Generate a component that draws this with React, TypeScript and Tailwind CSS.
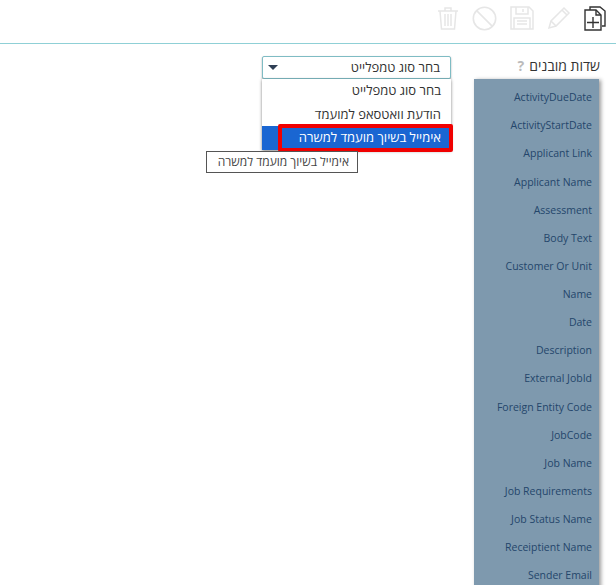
import React from "react";

const fields = [
  "ActivityDueDate",
  "ActivityStartDate",
  "Applicant Link",
  "Applicant Name",
  "Assessment",
  "Body Text",
  "Customer Or Unit",
  "Name",
  "Date",
  "Description",
  "External JobId",
  "Foreign Entity Code",
  "JobCode",
  "Job Name",
  "Job Requirements",
  "Job Status Name",
  "Receiptient Name",
  "Sender Email",
];

function TrashIcon() {
  return (
    <svg width="22" height="24" viewBox="0 0 22 24" fill="none" stroke="#e6e6e6" strokeWidth="1.5">
      <path d="M1 5h20M8 5V2h6v3" />
      <path d="M3 5l1.5 18h13L19 5" />
      <path d="M8 8v12M11 8v12M14 8v12" />
    </svg>
  );
}

function BanIcon() {
  return (
    <svg width="25" height="25" viewBox="0 0 25 25" fill="none" stroke="#e6e6e6" strokeWidth="1.6">
      <circle cx="12.5" cy="12.5" r="11.2" />
      <path d="M4.6 4.6l15.8 15.8" />
    </svg>
  );
}

function SaveIcon() {
  return (
    <svg width="24" height="24" viewBox="0 0 24 24" fill="none" stroke="#e6e6e6" strokeWidth="1.5">
      <path d="M1 1h18l4 4v18H1z" />
      <path d="M6 1v7h12V1M13 3v3" />
      <path d="M4 23V12h16v11M7 15h10M7 18h10" />
    </svg>
  );
}

function PencilIcon() {
  return (
    <svg width="24" height="24" viewBox="0 0 24 24" fill="none" stroke="#e6e6e6" strokeWidth="1.5">
      <path d="M2 22l2-7L17 2l5 5L9 20z" />
      <path d="M4 15l5 5M15 4l5 5" />
    </svg>
  );
}

function NewIcon() {
  return (
    <svg width="22" height="25" viewBox="0 0 22 25" fill="none" stroke="#333333" strokeWidth="1.4">
      <path d="M6 4V1h10l5 4v15h-3" />
      <path d="M1 4h11l5 5v15H1z" fill="#ffffff" />
      <path d="M12 4v5h5" />
      <path d="M9 11v11M3 16.5h12" />
    </svg>
  );
}

export default function App(): JSX.Element {
  return (
    <div className="w-[616px] h-[585px] overflow-hidden bg-white font-['Open_Sans','Liberation_Sans',sans-serif]">
      <div className="h-[44px] border-b border-[#8fd0d6] flex justify-end items-start pt-[6px] pr-[10px] gap-[13px]">
        <TrashIcon />
        <BanIcon />
        <SaveIcon />
        <PencilIcon />
        <NewIcon />
      </div>
      <div className="flex justify-end items-start pr-[17px] gap-[23px] pt-[12px]">
        <div className="relative w-[189px] mt-0">
          <div className="h-[23px] rounded-[2px] border border-[#7fbcc4] shadow-[0_1px_2px_rgba(0,0,0,0.35)] flex items-center justify-between pl-[5px] pr-[10px] text-[13px] text-[#333333] bg-white">
            <span className="w-0 h-0 border-x-[5px] border-x-transparent border-t-[5px] border-t-[#2f3f55]" />
            <span dir="rtl">בחר סוג טמפלייט</span>
          </div>
          <div dir="rtl" className="absolute top-[23px] left-0 w-[189px] h-[71px] bg-white shadow-[0_1px_3px_rgba(0,0,0,0.5)] text-[13px] text-[#333333]">
            <div className="h-[24px] flex items-center pr-[10px]">בחר סוג טמפלייט</div>
            <div className="h-[23px] flex items-center pr-[10px]">הודעת וואטסאפ למועמד</div>
            <div className="h-[24px] flex items-center pr-[10px] bg-[#1a66d2] text-white">אימייל בשיוך מועמד למשרה</div>
          </div>
          <div className="absolute top-[68px] left-[16px] w-[175px] h-[28px] border-[4px] border-[#f00000] rounded-[2px]" />
          <div dir="rtl" className="absolute top-[95px] left-[-56px] w-[152px] h-[22px] bg-white border border-[#555555] flex items-center pr-[8px] text-[12px] text-[#444444]">
            אימייל בשיוך מועמד למשרה
          </div>
        </div>
        <div className="w-[125px]">
          <div className="flex justify-end items-center gap-[5px] h-[18px] text-[14px] text-[#333333] pr-0 mr-[-1px]">
            <span className="text-[#bbbbbb] font-bold text-[14px]">?</span>
            <span dir="rtl">שדות מובנים</span>
          </div>
          <div className="mt-[5px] h-[520px] bg-[#7e99ae] shadow-[2px_1px_4px_rgba(0,0,0,0.4)] pt-[5px] pr-[7px]">
            {fields.map((field) => (
              <div key={field} className="h-[28.13px] flex items-center justify-end text-[10.5px] text-[#24466b] whitespace-nowrap">
                {field}
              </div>
            ))}
          </div>
        </div>
      </div>
    </div>
  );
}
